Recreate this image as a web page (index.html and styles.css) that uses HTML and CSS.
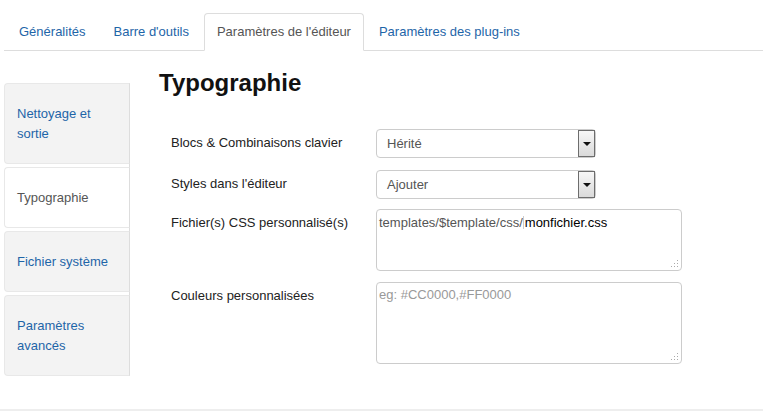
FILE: index.html
```html
<!DOCTYPE html>
<html lang="fr">
<head>
    <meta charset="UTF-8">
    <meta name="viewport" content="width=device-width, initial-scale=1.0">
    <title>Paramètres de l'éditeur</title>
    <link rel="stylesheet" href="styles.css">
</head>
<body>
    <div class="page">
        <ul class="tabs">
            <li><a href="#">Généralités</a></li>
            <li><a href="#">Barre d'outils</a></li>
            <li class="active"><a href="#">Paramètres de l'éditeur</a></li>
            <li><a href="#">Paramètres des plug-ins</a></li>
        </ul>

        <div class="panes">
            <ul class="side-tabs">
                <li><a href="#">Nettoyage et sortie</a></li>
                <li class="active"><a href="#">Typographie</a></li>
                <li><a href="#">Fichier système</a></li>
                <li><a href="#">Paramètres avancés</a></li>
            </ul>

            <div class="main">
                <h2>Typographie</h2>
                <div class="form">
                    <div class="row">
                        <label>Blocs &amp; Combinaisons clavier</label>
                        <div class="select">Hérité<span class="arrow"></span></div>
                    </div>
                    <div class="row">
                        <label>Styles dans l'éditeur</label>
                        <div class="select">Ajouter<span class="arrow"></span></div>
                    </div>
                    <div class="row row-text">
                        <label>Fichier(s) CSS personnalisé(s)</label>
                        <div class="textarea short">
                            <span class="path">templates/$template/css/</span><span class="caret"></span><span class="file">monfichier.css</span>
                            <svg class="grip" width="8" height="8" viewBox="0 0 8 8">
                                <rect x="6" y="0" width="1" height="1" fill="#aaa"/>
                                <rect x="3" y="3" width="1" height="1" fill="#aaa"/>
                                <rect x="6" y="3" width="1" height="1" fill="#aaa"/>
                                <rect x="0" y="6" width="1" height="1" fill="#aaa"/>
                                <rect x="3" y="6" width="1" height="1" fill="#aaa"/>
                                <rect x="6" y="6" width="1" height="1" fill="#aaa"/>
                            </svg>
                        </div>
                    </div>
                    <div class="row row-text">
                        <label>Couleurs personnalisées</label>
                        <div class="textarea tall">
                            <span class="placeholder">eg: #CC0000,#FF0000</span>
                            <svg class="grip" width="8" height="8" viewBox="0 0 8 8">
                                <rect x="6" y="0" width="1" height="1" fill="#aaa"/>
                                <rect x="3" y="3" width="1" height="1" fill="#aaa"/>
                                <rect x="6" y="3" width="1" height="1" fill="#aaa"/>
                                <rect x="0" y="6" width="1" height="1" fill="#aaa"/>
                                <rect x="3" y="6" width="1" height="1" fill="#aaa"/>
                                <rect x="6" y="6" width="1" height="1" fill="#aaa"/>
                            </svg>
                        </div>
                    </div>
                </div>
            </div>
        </div>
    </div>
</body>
</html>
```

FILE: styles.css
```css
body, html {
    margin: 0;
    padding: 0;
    background-color: #fff;
    font-family: "Liberation Sans", Arial, sans-serif;
    font-size: 13px;
    line-height: 18px;
    color: #333;
}
a {
    color: #1e65a8;
    text-decoration: none;
}
.page {
    height: 409px;
    border-bottom: 2px solid #eee;
    overflow: hidden;
}
.tabs {
    display: flex;
    list-style: none;
    margin: 13px 0 0 4px;
    padding: 0 0 0 2px;
    border-bottom: 1px solid #ddd;
}
.tabs li {
    margin: 0 2px -1px 0;
}
.tabs a {
    display: block;
    padding: 9px 12px;
    border: 1px solid transparent;
    border-radius: 4px 4px 0 0;
}
.tabs .active a {
    color: #555;
    background: #fff;
    border-color: #ddd #ddd transparent;
}
.panes {
    display: flex;
    margin-left: 4px;
}
.side-tabs {
    list-style: none;
    margin: 32px 0 0;
    padding: 0;
    width: 125px;
    border-right: 1px solid #ddd;
    align-self: flex-start;
}
.side-tabs li {
    margin: 0 -1px 3px 0;
}
.side-tabs li:last-child {
    margin-bottom: 0;
}
.side-tabs a {
    display: block;
    padding: 20px 12px 19px;
    line-height: 20px;
    background: #f3f3f3;
    border: 1px solid #e8e8e8;
    border-right-color: #ddd;
    border-radius: 4px 0 0 4px;
}
.side-tabs .active a {
    color: #555;
    background: #fff;
}
.main {
    margin-left: 29px;
    padding-top: 17px;
    flex: 1;
}
.main h2 {
    margin: 0;
    font-size: 24px;
    line-height: 30px;
    font-weight: bold;
    color: #111;
}
.form {
    margin-top: 31px;
    padding-left: 12px;
}
.row {
    display: flex;
    margin-bottom: 12px;
}
.row-text {
    margin-bottom: 11px;
}
.row:nth-child(2) {
    margin-bottom: 10px;
}
.row label {
    width: 205px;
    padding-top: 5px;
    color: #222;
}
.select {
    position: relative;
    box-sizing: border-box;
    width: 220px;
    height: 29px;
    padding: 5px 10px;
    border: 1px solid #ccc;
    border-radius: 4px;
    color: #555;
}
.select .arrow {
    position: absolute;
    top: 0;
    right: 0;
    width: 15px;
    height: 25px;
    border: 1px solid #6d6d6d;
    background: linear-gradient(#f7f7f7, #dadada);
}
.select .arrow::after {
    content: "";
    position: absolute;
    left: 4px;
    top: 11px;
    border-left: 4px solid transparent;
    border-right: 4px solid transparent;
    border-top: 4px solid #111;
}
.textarea {
    position: relative;
    box-sizing: border-box;
    width: 306px;
    padding: 4px 2px;
    border: 1px solid #ccc;
    border-radius: 4px;
    color: #555;
}
.textarea.short {
    height: 62px;
}
.textarea.tall {
    height: 82px;
    padding-top: 3px;
}
.textarea .file {
    color: #000;
}
.textarea .caret {
    display: inline-block;
    width: 1px;
    height: 13px;
    margin: 0 1px -2px 0;
    background: #ccc;
}
.textarea .placeholder {
    color: #999;
}
.grip {
    position: absolute;
    right: 2px;
    bottom: 2px;
}
```
